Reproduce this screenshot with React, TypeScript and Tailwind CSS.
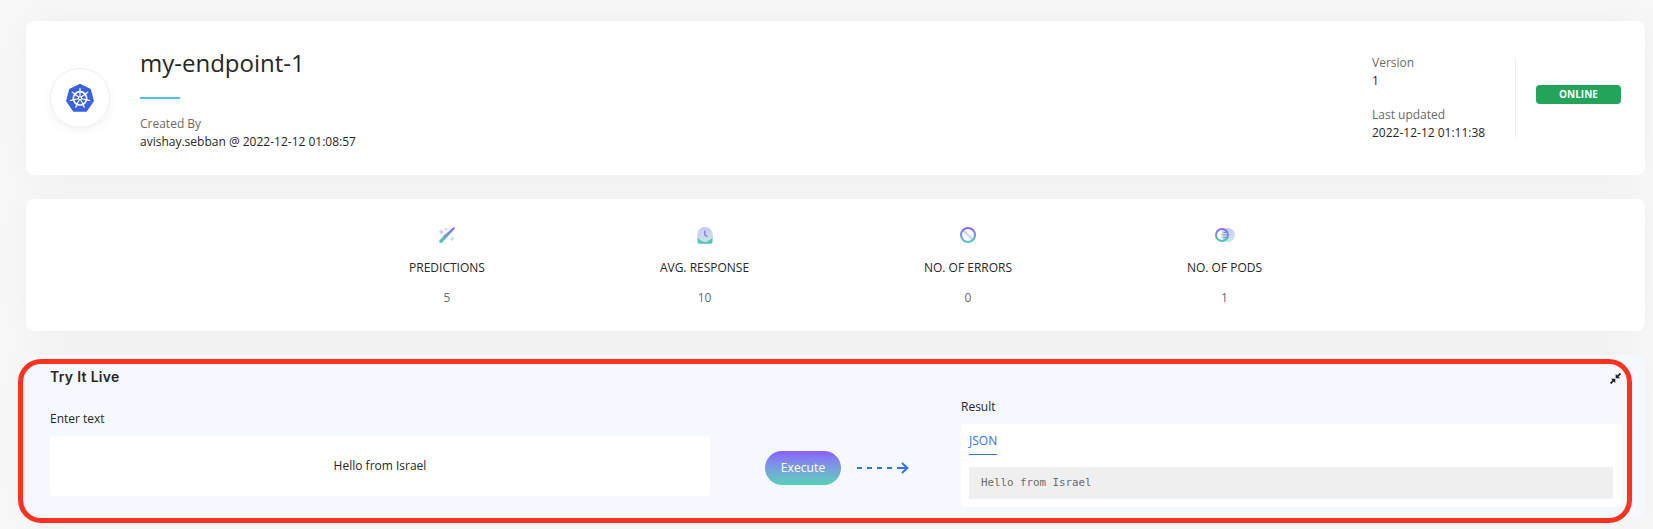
import React from "react";

function Gradient({ id }: { id: string }) {
  return (
    <defs>
      <linearGradient id={id} x1="0" y1="0" x2="0" y2="16" gradientUnits="userSpaceOnUse">
        <stop offset="0" stopColor="#8b5cff" />
        <stop offset="1" stopColor="#4fd0b0" />
      </linearGradient>
    </defs>
  );
}

function KubernetesLogo() {
  const spokes = [0, 1, 2, 3, 4, 5, 6].map((i) => (i * 360) / 7);
  return (
    <svg width="28" height="28" viewBox="0 0 28 28">
      <path
        d="M14 1 L23.9 5.6 L26.9 17 L20 26.8 H8 L1.1 17 L4.1 5.6 Z"
        fill="#3a62e0"
        stroke="#3a62e0"
        strokeWidth="2"
        strokeLinejoin="round"
      />
      <g transform="translate(14 14.3)" stroke="#fff" fill="none" strokeLinecap="round">
        <circle r="6.7" strokeWidth="1.7" />
        {spokes.map((a) => (
          <g key={a} transform={`rotate(${a})`}>
            <path d="M0 -2 V-6.4" strokeWidth="1.2" />
            <path d="M0 -7 V-9.9" strokeWidth="1.2" />
          </g>
        ))}
        <circle r="1.5" strokeWidth="1.1" />
      </g>
    </svg>
  );
}

function WandIcon() {
  return (
    <svg width="16" height="16" viewBox="0 0 16 16">
      <Gradient id="wand" />
      <path d="M0.4 13.4 L4.4 9.4 L4.8 8 L6.2 7.6 L14.2 0.4 Q15.2 -0.1 15.8 0.6 Q16.1 1.4 15.5 2.1 L3.2 15.5 Q1.8 16.5 0.6 15.6 Q-0.3 14.6 0.4 13.4Z" fill="url(#wand)" />
      <path d="M2.3 2.6 L3 4.2 L4.6 4.9 L3 5.6 L2.3 7.2 L1.6 5.6 L0 4.9 L1.6 4.2Z" fill="#c5c6f8" stroke="#c5c6f8" strokeWidth="0.6" />
      <path d="M6.8 0.6 L7.3 1.7 L8.4 2.2 L7.3 2.7 L6.8 3.8 L6.3 2.7 L5.2 2.2 L6.3 1.7Z" fill="#d2c8fb" stroke="#d2c8fb" strokeWidth="0.5" />
      <path d="M13.2 9.6 L13.9 11.2 L15.5 11.9 L13.9 12.6 L13.2 14.2 L12.5 12.6 L10.9 11.9 L12.5 11.2Z" fill="#b9e3e6" stroke="#b9e3e6" strokeWidth="0.6" />
    </svg>
  );
}

function ClockIcon() {
  return (
    <svg width="16" height="17" viewBox="0 0 16 17">
      <defs>
        <linearGradient id="clock" x1="0" y1="0" x2="0" y2="1">
          <stop offset="0" stopColor="#d1c3fc" />
          <stop offset="1" stopColor="#c3eae4" />
        </linearGradient>
      </defs>
      <path d="M0.5 9.5 H15.5 V15 Q15.5 16.7 13.8 16.7 H2.2 Q0.5 16.7 0.5 15Z" fill="#55c8ba" />
      <path d="M0.5 12 V7.6 A7.5 7.5 0 0 1 15.5 7.6 V12Z" fill="#b9cdec" />
      <circle cx="8" cy="7.6" r="7.3" fill="url(#clock)" />
      <path d="M7.8 4 V8 L10 9.6" fill="none" stroke="#7f6ce8" strokeWidth="1.2" strokeLinecap="round" />
    </svg>
  );
}

function ErrorIcon() {
  return (
    <svg width="16" height="16" viewBox="0 0 16 16">
      <Gradient id="err" />
      <path d="M3.2 3.2 L12.8 12.8" stroke="#c8d2f3" strokeWidth="2" />
      <circle cx="8" cy="8" r="7" fill="none" stroke="url(#err)" strokeWidth="2" />
    </svg>
  );
}

function PodsIcon() {
  return (
    <svg width="20" height="16" viewBox="0 0 20 16">
      <Gradient id="pods" />
      <defs>
        <linearGradient id="podsLight" x1="0" y1="0" x2="0" y2="1">
          <stop offset="0" stopColor="#d3c5fd" />
          <stop offset="1" stopColor="#c2ece5" />
        </linearGradient>
      </defs>
      <circle cx="13" cy="8" r="7" fill="url(#podsLight)" />
      <circle cx="7" cy="8" r="6" fill="none" stroke="url(#pods)" strokeWidth="2" />
      <path d="M8.4 5.5 H12 M7.8 8 H13 M8.4 10.5 H12" stroke="#6f8fd9" strokeWidth="1" />
    </svg>
  );
}

function CollapseIcon() {
  return (
    <svg width="11" height="11" viewBox="0 0 11 11" fill="#1f2023">
      <path d="M5.7 0.9 V5.3 H10.1 Z" />
      <path d="M6.8 4.2 L10.5 0.5" stroke="#1f2023" strokeWidth="1.8" />
      <path d="M0.9 5.7 H5.3 V10.1 Z" />
      <path d="M4.2 6.8 L0.5 10.5" stroke="#1f2023" strokeWidth="1.8" />
    </svg>
  );
}

function Field({ label, value }: { label: string; value: string }) {
  return (
    <div className="leading-[18px]">
      <div className="text-[#6a6a6a]">{label}</div>
      <div>{value}</div>
    </div>
  );
}

const stats = [
  { label: "PREDICTIONS", value: "5", icon: <WandIcon />, width: "w-[76px]" },
  { label: "AVG. RESPONSE", value: "10", icon: <ClockIcon />, width: "w-[89px]" },
  { label: "NO. OF ERRORS", value: "0", icon: <ErrorIcon />, width: "w-[88px]" },
  { label: "NO. OF PODS", value: "1", icon: <PodsIcon />, width: "w-[75px]" },
];

export default function App() {
  return (
    <div className="flex h-[529px] w-[1653px] flex-col gap-6 overflow-hidden bg-[#f8f8f8] pt-[21px] pr-2 pl-[26px] font-['Open_Sans',sans-serif] text-xs text-[#262626]">
      <header className="flex h-[154px] shrink-0 items-center rounded-lg bg-white px-6 shadow-[0_0_40px_rgba(0,0,0,0.045)]">
        <div className="flex size-[60px] items-center justify-center rounded-full border border-[#f0f0f0] bg-white shadow-[0_3px_8px_rgba(0,0,0,0.05)]">
          <KubernetesLogo />
        </div>
        <div className="ml-[30px] grow">
          <h1 className="text-2xl leading-9">my-endpoint-1</h1>
          <div className="my-4 h-0.5 w-10 bg-[#50bfec]" />
          <Field label="Created By" value="avishay.sebban @ 2022-12-12 01:08:57" />
        </div>
        <div className="flex w-[143px] flex-col gap-4">
          <Field label="Version" value="1" />
          <Field label="Last updated" value="2022-12-12 01:11:38" />
        </div>
        <div className="h-20 w-px bg-[#eeeef6]" />
        <div className="mb-[7px] ml-5 flex h-[19px] w-[85px] items-center justify-center rounded bg-[#22a55b] text-[10px] font-bold text-white">
          ONLINE
        </div>
      </header>

      <section className="flex h-[132px] shrink-0 justify-center gap-[175px] rounded-lg bg-white pt-7 shadow-[0_0_40px_rgba(0,0,0,0.045)]">
        {stats.map((s) => (
          <div key={s.label} className={`flex flex-col items-center leading-[18px] whitespace-nowrap ${s.width}`}>
            <div className="flex h-[17px] items-start">{s.icon}</div>
            <div className="mt-[15px]">{s.label}</div>
            <div className="mt-3 text-[#6a6a6a]">{s.value}</div>
          </div>
        ))}
      </section>

      <section className="relative flex h-[164px] shrink-0 flex-col rounded-lg bg-[#f5f8ff] px-6 shadow-[0_0_40px_rgba(0,0,0,0.045)]">
        <div className="flex h-[42px] items-start justify-between pt-3">
          <h2 className="font-[Inter,sans-serif] text-sm leading-5 font-semibold tracking-[0.3px]">Try It Live</h2>
          <div className="pt-1.5">
            <CollapseIcon />
          </div>
        </div>
        <div className="flex items-start">
          <div className="w-[660px] pt-[13px]">
            <div className="leading-[18px]">Enter text</div>
            <div className="mt-2 flex h-[60px] items-center justify-center rounded bg-white">Hello from Israel</div>
          </div>
          <div className="ml-[55px] flex items-center gap-4 pt-[54px]">
            <button className="h-[34px] w-[76px] rounded-full bg-linear-to-b from-[#8b5cff] to-[#55d0b4] font-medium tracking-[0.1px] text-white">
              Execute
            </button>
            <svg width="53" height="12" viewBox="0 0 53 12" fill="none" stroke="#3370e8" strokeWidth="2">
              <path d="M0 6 H47" strokeDasharray="5 5" />
              <path d="M45 6 H50 M45 0.9 L50.4 6 L45 11.1" />
            </svg>
          </div>
          <div className="ml-[51px] w-[660px] pt-px">
            <div className="leading-[18px]">Result</div>
            <div className="mt-2 h-[83px] rounded bg-white px-2 pt-2">
              <div className="h-[23px] w-fit border-b border-[#3370e8] leading-[18px] text-[#3370e8]">JSON</div>
              <div className="mt-3 flex h-8 items-center bg-[#efefef] pl-3 font-['DejaVu_Sans_Mono',monospace] text-[10.8px] text-[#6a6a6a]">
                Hello from Israel
              </div>
            </div>
          </div>
        </div>
        <div className="pointer-events-none absolute top-1 -left-2 h-[164px] w-[1614px] rounded-[23px] border-5 border-[#ff3120]" />
      </section>
    </div>
  );
}
